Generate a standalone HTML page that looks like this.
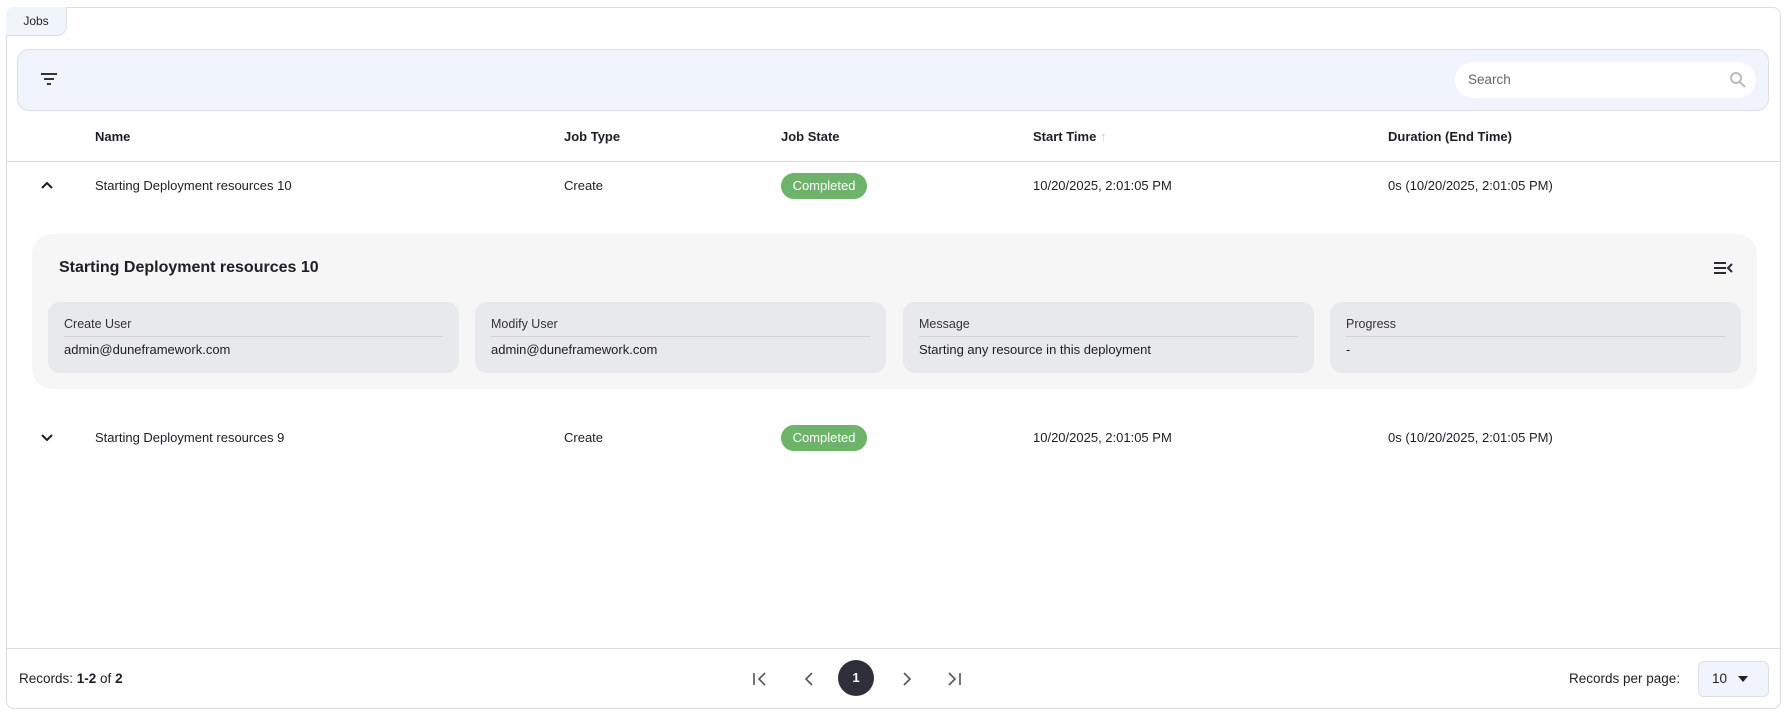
<!DOCTYPE html>
<html><head><style>
*{box-sizing:border-box;margin:0;padding:0}
body{width:1787px;height:713px;background:#fff;font-family:"Liberation Sans",sans-serif;color:#1e1e24;font-size:13px;position:relative;overflow:hidden}
.a{position:absolute;white-space:nowrap}
.h{font-weight:bold;font-size:13px}
.card{position:absolute;top:302px;width:411px;height:71px;background:#e8e9ec;border-radius:12px}
.card .l{position:absolute;left:16px;top:15px;font-size:12.5px;color:#333}
.card .ln{position:absolute;left:16px;right:16px;top:34px;border-top:1px solid #d3d4d8}
.card .v{position:absolute;left:16px;top:40px;font-size:13px}
.badge{position:absolute;width:86px;height:26px;border-radius:13px;background:#6db36a;color:#fff;font-size:13px;text-align:center;line-height:26px}
</style></head><body>
<div class="a" style="left:6px;top:7px;width:1775px;height:702px;border:1px solid #dcdde0;border-radius:8px"></div>
<div class="a" style="left:6px;top:7px;width:61px;height:29px;background:#f0f4fb;border:1px solid #dcdde0;border-top:none;border-left:none;border-radius:8px 0 10px 0;font-size:12px;line-height:28px;text-align:center">Jobs</div>
<div class="a" style="left:17px;top:49px;width:1752px;height:62px;background:#f0f4fc;border:1px solid #dcdfe6;border-radius:12px"></div>
<svg class="a" style="left:39px;top:71px" width="20" height="16" viewBox="0 0 20 16"><path d="M2 3h16M5 8h10M8 13h4" stroke="#333" stroke-width="2"/></svg>
<div class="a" style="left:1455px;top:62px;width:301px;height:36px;background:#fff;border-radius:18px"></div>
<div class="a" style="left:1468px;top:72px;font-size:13.5px;color:#666">Search</div>
<svg class="a" style="left:1729px;top:71px" width="18" height="18" viewBox="0 0 18 18"><circle cx="7" cy="7" r="5" fill="none" stroke="#bbb" stroke-width="2"/><path d="M11 11l5 5" stroke="#bbb" stroke-width="2"/></svg>
<div class="a h" style="left:95px;top:129px">Name</div>
<div class="a h" style="left:564px;top:129px">Job Type</div>
<div class="a h" style="left:781px;top:129px">Job State</div>
<div class="a h" style="left:1033px;top:129px">Start Time <span style="color:#ccc;font-weight:normal">↑</span></div>
<div class="a h" style="left:1388px;top:129px">Duration (End Time)</div>
<div class="a" style="left:6px;top:161px;width:1775px;border-top:1px solid #dcdde0"></div>
<svg class="a" style="left:40px;top:180px" width="14" height="10" viewBox="0 0 14 10"><path d="M2 8l5-5 5 5" fill="none" stroke="#1e1e24" stroke-width="2"/></svg>
<div class="a" style="left:95px;top:178px">Starting Deployment resources 10</div>
<div class="a" style="left:564px;top:178px">Create</div>
<div class="badge" style="left:781px;top:173px">Completed</div>
<div class="a" style="left:1033px;top:178px">10/20/2025, 2:01:05 PM</div>
<div class="a" style="left:1388px;top:178px">0s (10/20/2025, 2:01:05 PM)</div>
<div class="a" style="left:32px;top:234px;width:1725px;height:155px;background:#f6f6f7;border-radius:20px"></div>
<div class="a" style="left:59px;top:259px;font-size:16px;font-weight:bold">Starting Deployment resources 10</div>
<svg class="a" style="left:1713px;top:260px" width="20" height="16" viewBox="0 0 20 16"><path d="M1 3h12M1 8h12M1 13h12M19 4l-4 4 4 4" fill="none" stroke="#2a2a35" stroke-width="2"/></svg>
<div class="card" style="left:48px"><div class="l">Create User</div><div class="ln"></div><div class="v">admin@duneframework.com</div></div>
<div class="card" style="left:475px"><div class="l">Modify User</div><div class="ln"></div><div class="v">admin@duneframework.com</div></div>
<div class="card" style="left:903px"><div class="l">Message</div><div class="ln"></div><div class="v">Starting any resource in this deployment</div></div>
<div class="card" style="left:1330px"><div class="l">Progress</div><div class="ln"></div><div class="v">-</div></div>
<svg class="a" style="left:40px;top:433px" width="14" height="10" viewBox="0 0 14 10"><path d="M2 2l5 5 5-5" fill="none" stroke="#1e1e24" stroke-width="2"/></svg>
<div class="a" style="left:95px;top:430px">Starting Deployment resources 9</div>
<div class="a" style="left:564px;top:430px">Create</div>
<div class="badge" style="left:781px;top:425px">Completed</div>
<div class="a" style="left:1033px;top:430px">10/20/2025, 2:01:05 PM</div>
<div class="a" style="left:1388px;top:430px">0s (10/20/2025, 2:01:05 PM)</div>
<div class="a" style="left:6px;top:648px;width:1775px;border-top:1px solid #dcdde0"></div>
<div class="a" style="left:19px;top:671px;font-size:13.5px">Records: <b>1-2</b> of <b>2</b></div>
<svg class="a" style="left:752px;top:670px" width="220" height="18" viewBox="0 0 220 18"><path d="M2 3v12M13 3l-6 6 6 6M60 3l-6 6 6 6M152 3l6 6-6 6M197 3l6 6-6 6M208 3v12" fill="none" stroke="#555" stroke-width="1.6"/></svg>
<div class="a" style="left:838px;top:660px;width:36px;height:36px;border-radius:50%;background:#2f2f3a;color:#fff;font-weight:bold;font-size:13px;text-align:center;line-height:36px">1</div>
<div class="a" style="left:1569px;top:671px;font-size:13.5px">Records per page:</div>
<div class="a" style="left:1698px;top:661px;width:71px;height:36px;background:#f0f4fc;border:1px solid #dcdfe6;border-radius:6px"></div>
<div class="a" style="left:1712px;top:671px;font-size:13.5px">10</div>
<svg class="a" style="left:1737px;top:675px" width="12" height="8" viewBox="0 0 12 8"><path d="M1 1h10L6 7z" fill="#222"/></svg>
</body></html>
